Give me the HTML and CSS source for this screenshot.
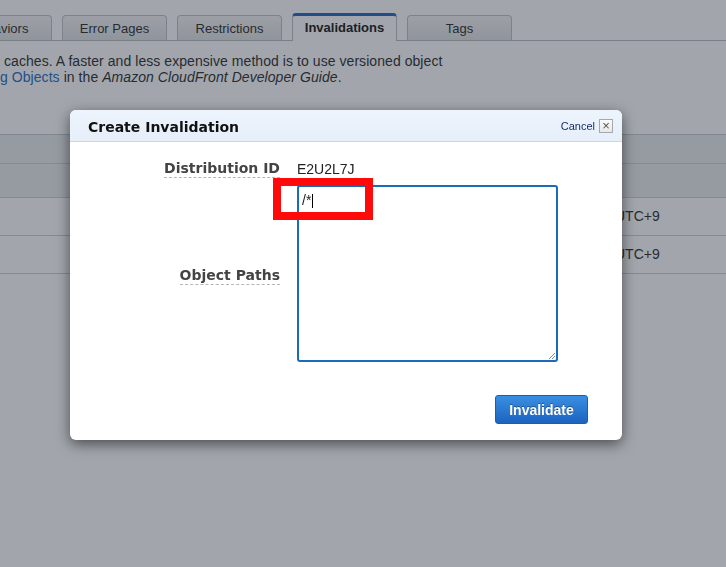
FILE: index.html
```html
<!DOCTYPE html>
<html lang="en">
<head>
<meta charset="utf-8">
<title>Create Invalidation</title>
<link rel="stylesheet" href="styles.css">
</head>
<body>
<div class="page">
  <div class="tabs">
    <div class="tab">Behaviors</div>
    <div class="tab">Error Pages</div>
    <div class="tab">Restrictions</div>
    <div class="tab active">Invalidations</div>
    <div class="tab">Tags</div>
  </div>
  <div class="intro">
    <div class="line first">caches. A faster and less expensive method is to use versioned object</div>
    <div class="line"><a class="link">g Objects</a> in the <em>Amazon CloudFront Developer Guide</em>.</div>
  </div>
  <div class="table">
    <div class="thead h1"></div>
    <div class="thead h2"></div>
    <div class="trow"><span class="cell-date">UTC+9</span></div>
    <div class="trow"><span class="cell-date">UTC+9</span></div>
  </div>
</div>

<div class="overlay"></div>

<div class="modal">
  <div class="modal-header">
    <div class="modal-title">Create Invalidation</div>
    <div class="modal-close"><span class="cancel">Cancel</span><span class="xbox">×</span></div>
  </div>
  <div class="modal-body">
    <div class="label"><span>Distribution ID</span></div>
    <div class="value">E2U2L7J</div>
    <div class="label paths"><span>Object Paths</span></div>
    <div class="textbox" role="textbox">/*<span class="caret"></span>
      <svg class="grip" width="9" height="9" viewBox="0 0 9 9"><path d="M8 2 L2 8 M8 5 L5 8" stroke="#8a8a8a" stroke-width="1" fill="none"/></svg>
    </div>
  </div>
  <div class="modal-footer">
    <button class="btn-primary">Invalidate</button>
  </div>
  <div class="highlight"></div>
</div>
</body>
</html>
```

FILE: styles.css
```css
html, body {
  margin: 0;
  padding: 0;
}
body {
  width: 726px;
  height: 567px;
  overflow: hidden;
  background: #ffffff;
  font-family: "Liberation Sans", Arial, sans-serif;
  color: #333;
}
.page {
  padding-top: 15px;
}
.tabs {
  display: flex;
  gap: 10px;
  margin-left: -53px;
  height: 25px;
  border-bottom: 1px solid #b9bcc0;
  align-items: flex-end;
}
.tab {
  box-sizing: border-box;
  width: 105px;
  flex: none;
  height: 25px;
  border: 1px solid #c2c4c7;
  border-bottom: none;
  border-radius: 4px 4px 0 0;
  background: linear-gradient(#f6f6f6, #e1e2e3);
  font-size: 13px;
  color: #333;
  text-align: center;
  line-height: 25px;
}
.tab.active {
  height: 28px;
  margin-bottom: -1px;
  background: #fff;
  border-top: 3px solid #2c6cc0;
  font-weight: bold;
  color: #222;
  line-height: 24px;
}
.intro {
  margin-top: 12px;
  font-size: 14px;
  line-height: 16px;
  color: #333;
  letter-spacing: 0.06px;
}
.intro .first {
  padding-left: 4px;
}
.link {
  color: #2a6fc4;
}
.table {
  margin-top: 49px;
  border-top: 1px solid #c9cbce;
}
.thead {
  background: #ebedef;
  border-bottom: 1px solid #cfd1d4;
}
.h1 { height: 28px; }
.h2 { height: 33px; }
.trow {
  height: 37px;
  border-bottom: 1px solid #cfd1d4;
  display: flex;
  align-items: center;
  font-size: 14px;
  color: #333;
}
.cell-date {
  margin-left: 615px;
  margin-bottom: 2px;
}
.overlay {
  position: fixed;
  inset: 0;
  background: rgba(22, 33, 48, 0.4);
}
.modal {
  position: absolute;
  left: 70px;
  top: 110px;
  width: 552px;
  height: 330px;
  box-sizing: border-box;
  background: #fff;
  border-radius: 6px;
  box-shadow: 0 4px 14px rgba(0, 0, 0, 0.55);
  display: flex;
  flex-direction: column;
}
.modal-header {
  height: 31px;
  border-bottom: 1px solid #c9d7e8;
  background: linear-gradient(#edf4fd, #e6effa);
  border-radius: 6px 6px 0 0;
  display: flex;
  align-items: center;
  justify-content: space-between;
  padding: 0 9px 0 18px;
}
.modal-title {
  font-family: "DejaVu Sans", Verdana, sans-serif;
  font-weight: bold;
  font-size: 14px;
  color: #111;
  padding-top: 2px;
}
.modal-close {
  display: flex;
  align-items: center;
  gap: 4px;
}
.cancel {
  font-size: 11px;
  color: #1c2c6c;
}
.xbox {
  box-sizing: border-box;
  width: 14px;
  height: 14px;
  border: 1px solid #a6a8ab;
  background: linear-gradient(#fbfbfb, #e6e7e8);
  font-size: 13px;
  line-height: 11px;
  text-align: center;
  color: #555;
}
.modal-body {
  display: grid;
  grid-template-columns: 210px 261px;
  column-gap: 17px;
  row-gap: 7px;
  padding-top: 18px;
  align-items: center;
}
.label {
  justify-self: end;
}
.label.paths {
  padding-top: 5px;
}
.label span {
  display: block;
  font-family: "DejaVu Sans", Verdana, sans-serif;
  font-weight: bold;
  font-size: 14px;
  line-height: 16px;
  color: #444;
  padding-bottom: 1px;
  border-bottom: 1px dashed #b5b5b5;
}
.value {
  width: 59px;
  overflow: hidden;
  white-space: nowrap;
  font-size: 14px;
  line-height: 16px;
  color: #222;
}
.textbox {
  position: relative;
  box-sizing: border-box;
  height: 177px;
  border: 2px solid #1a6bb8;
  border-radius: 3px;
  padding: 6px 3px;
  font-size: 14px;
  line-height: 14px;
  color: #222;
}
.caret {
  display: inline-block;
  width: 1px;
  height: 14px;
  background: #000;
  vertical-align: -3px;
  margin-left: 1px;
}
.grip {
  position: absolute;
  right: 0;
  bottom: 0;
}
.modal-footer {
  display: flex;
  justify-content: flex-end;
  padding-right: 34px;
  margin-top: 33px;
}
.btn-primary {
  box-sizing: border-box;
  width: 93px;
  height: 29px;
  border: 1px solid #1b5eae;
  border-radius: 3px;
  background: linear-gradient(#3a8fe2, #1c63bf);
  color: #fff;
  font-family: "Liberation Sans", Arial, sans-serif;
  font-weight: bold;
  font-size: 14px;
  text-shadow: 0 -1px 0 rgba(0, 0, 0, 0.35);
  padding: 0;
}
.highlight {
  position: absolute;
  left: 203px;
  top: 68px;
  width: 100px;
  height: 42px;
  box-sizing: border-box;
  border: 8px solid #ff0a0a;
}
```
